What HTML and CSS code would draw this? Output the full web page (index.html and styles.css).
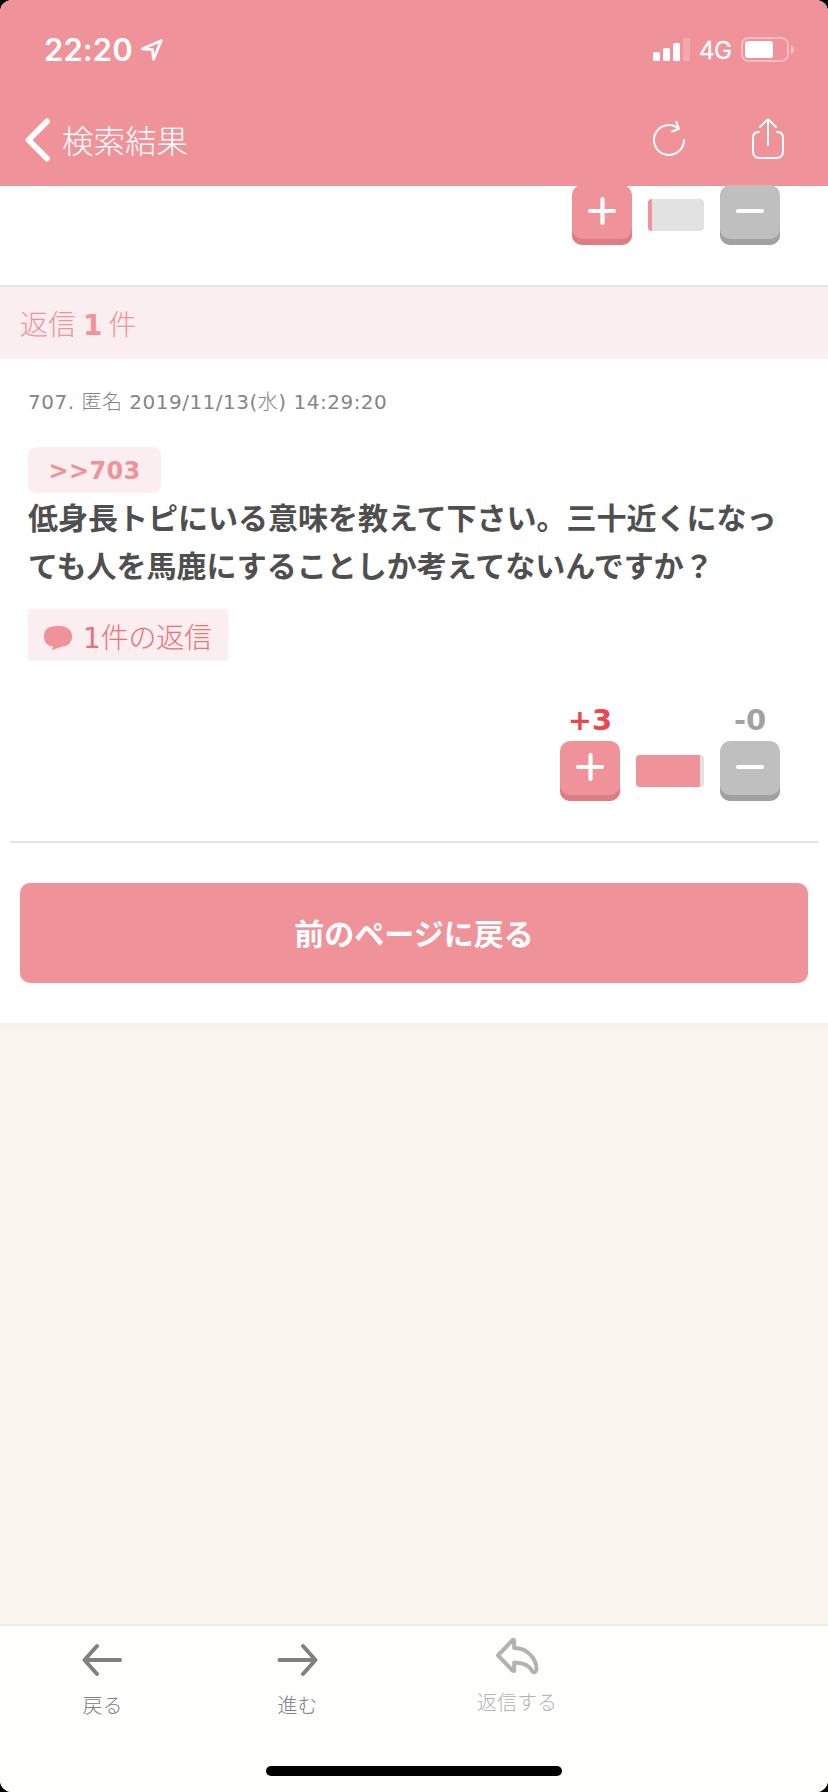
FILE: index.html
```html
<!DOCTYPE html>
<html lang="ja">
<head>
<meta charset="utf-8">
<title>検索結果</title>
<link rel="stylesheet" href="styles.css">
</head>
<body>
<div class="screen">
  <header class="header">
    <div class="status">
      <span class="time">22:20</span>
      <svg class="location" width="24" height="24" viewBox="0 0 24 24"><path d="M2.500 10.800 21.200 2.700 13.500 21.200 12.500 11.700Z"/></svg>
      <svg class="signal" width="37" height="23" viewBox="0 0 37 23"><rect y="14" width="7" height="9" rx="1.5"/><rect x="10" y="10" width="7" height="13" rx="1.5"/><rect x="20" y="5" width="7" height="18" rx="1.5"/><rect x="30" width="7" height="23" rx="1.5" opacity=".2"/></svg>
      <span class="network">4G</span>
      <svg class="battery" width="54" height="25" viewBox="0 0 54 25"><rect x="1" y="1" width="46" height="23" rx="6.5" fill="none" stroke="#fff" stroke-width="2" opacity=".38"/><rect x="4" y="4" width="28" height="17" rx="3"/><path d="M50 8.300Q53 9.500 53 12.500T50 16.700Z" opacity=".45"/></svg>
    </div>
    <nav class="navbar">
      <svg class="back" width="26" height="44" viewBox="0 0 26 44"><path d="M22 3.500 3.500 22 22 40.500"/></svg>
      <span class="nav-title">検索結果</span>
      <svg class="reload" width="34" height="40" viewBox="0 0 34 40"><path d="M32 21A15 15 0 1 1 27 9.800M24.500 3 27 9.800 20 12.500"/></svg>
      <svg class="share" width="34" height="42" viewBox="0 0 34 42"><path d="M8 14H7Q2 14.500 2 20V33Q2 40 9 40H25Q32 40 32 33V20Q32 14.500 27 14H26M17 27V2M9 9 15.800 2.200Q17 1 18.200 2.200L25 9"/></svg>
    </nav>
  </header>
  <main class="content">
    <section class="vote vote-top">
      <span class="key plus"><svg width="30" height="30" viewBox="0 0 30 30"><path d="M3 16H27M15.500 4V28"/></svg></span>
      <span class="ratio short"><i class="fill" style="width:4px"></i></span>
      <span class="key minus"><svg width="30" height="30" viewBox="0 0 30 30"><path d="M3 16H27"/></svg></span>
    </section>
    <h2 class="reply-heading">返信<b>1</b>件</h2>
    <article class="post">
      <p class="meta">707. <span class="thin">匿名</span> 2019/11/13(<span class="thin">水</span>) 14:29:20</p>
      <a class="anchor">&gt;&gt;703</a>
      <p class="text">低身長トピにいる意味を教えて下さい。三十近くになっても人を馬鹿にすることしか考えてないんですか？</p>
      <a class="replies"><svg width="28" height="26" viewBox="0 0 28 26"><path d="M13 1H15C24 1 28 5.500 28 11.500S24 21 19 21.500Q12 23 8 25.500L9 21.500C4 21 0 18 0 11.500S4 1 13 1Z"/></svg><span class="replies-label">1<span class="thin">件の返信</span></span></a>
      <div class="vote">
        <div class="vote-col"><b class="count up">+3</b><span class="key plus"><svg width="30" height="30" viewBox="0 0 30 30"><path d="M3 16H27M15.500 4V28"/></svg></span></div>
        <span class="ratio"><i class="fill" style="width:64px"></i></span>
        <div class="vote-col"><b class="count down">-0</b><span class="key minus"><svg width="30" height="30" viewBox="0 0 30 30"><path d="M3 16H27"/></svg></span></div>
      </div>
    </article>
    <a class="return">前のページに戻る</a>
  </main>
  <div class="backdrop"></div>
  <footer class="toolbar">
    <div class="tools">
      <a class="tool"><svg width="42" height="34" viewBox="0 0 42 34"><path d="M38 17H2.500M15 3 2.500 17 15 31"/></svg><span>戻る</span></a>
      <a class="tool forward"><svg width="42" height="34" viewBox="0 0 42 34"><path d="M2.500 17H38.500M26 3 38.500 17 26 31"/></svg><span>進む</span></a>
      <a class="tool reply"><svg width="44" height="38" viewBox="0 0 44 38"><path d="M3 18.300 17.500 3.200Q19.200 2 19.200 4.500V11C33 11 41.500 22 41.500 32.500Q40.500 36.500 37.500 34.500C34 27.500 28 25.500 19.200 25.500V32.500Q19.200 35 17.500 33.500Z"/></svg><span>返信する</span></a>
    </div>
    <div class="home"></div>
  </footer>
</div>
</body>
</html>
```
FILE: styles.css
```css
* { box-sizing: border-box; }
body { margin: 0; background: #000; font-family: "DejaVu Sans", "Noto Sans CJK JP", sans-serif; }
svg { display: block; flex: none; }
.screen { width: 828px; height: 1792px; display: flex; flex-direction: column; overflow: hidden; border-radius: 12px; background: #fff; }
.thin { font-family: "Noto Sans CJK JP", sans-serif; font-weight: 300; line-height: 1; }

.header { height: 186px; flex: none; background: #f0929a; color: #fff; }
.status { height: 99px; padding: 0 34px 0 44px; display: flex; align-items: center; fill: #fff; }
.time { width: 90px; font: 600 31px/40px Inter, sans-serif; letter-spacing: .1px; }
.location { margin: 1px auto 0 6px; fill: none; stroke: #fff; stroke-width: 2.800; stroke-linejoin: round; }
.network { width: 34px; margin: 2px 8px 0 9px; font: 400 24px/30px Inter, sans-serif; letter-spacing: -.6px; -webkit-text-stroke: .3px #fff; }
.battery { margin-right: -1px; }
.navbar { height: 84px; padding: 0 43px 0 25px; display: flex; align-items: center; fill: none; stroke: #fff; stroke-width: 2; stroke-linecap: round; stroke-linejoin: round; }
.back { margin-top: -2px; stroke-width: 6; }
.nav-title { margin: -4px auto 0 11px; font: 300 31.500px/40px "Noto Sans CJK JP", sans-serif; stroke: none; }
.reload { margin-right: 65px; margin-top: -4px; }
.share { margin-top: -4px; }

.content { height: 837px; flex: none; background: #fff; }
.vote { display: flex; justify-content: flex-end; align-items: flex-end; gap: 16px; }
.vote-top { height: 101px; padding: 0 48px 40px 0; border-bottom: 2px solid #e5e5e5; }
.vote-col { display: flex; flex-direction: column; align-items: center; }
.count { font-size: 29px; line-height: 34px; margin-bottom: 5px; position: relative; top: 1px; }
.up { color: #ea484e; }
.down { color: #a2a2a2; }
.key { width: 60px; height: 60px; padding: 10px 15px; border-radius: 10px; fill: none; stroke: #fff; stroke-width: 4.200; stroke-linecap: round; }
.plus { background: #f0929a; box-shadow: inset 0 -6px #dc7c84; }
.minus { background: #bfbfbf; box-shadow: inset 0 -6px #a1a1a1; }
.ratio { width: 68px; height: 32px; margin-bottom: 14px; border-radius: 4px; overflow: hidden; background: #e2e2e2; }
.short { width: 56px; }
.fill { display: block; height: 100%; background: #f0929a; }
.reply-heading { height: 72px; margin: 0; padding: 0 0 0 20px; background: #fbeef0; color: #f0929a; font: 300 28px/72px "Noto Sans CJK JP", sans-serif; }
.reply-heading b { font-family: "DejaVu Sans", sans-serif; font-size: 28px; font-weight: 700; line-height: 1; margin: 0 6px 0 7px; }

.post { height: 484px; margin: 0 10px; padding: 26px 38px 0 18px; display: flex; flex-direction: column; align-items: flex-start; border-bottom: 2px solid #e2e2e2; }
.meta { height: 32px; margin: 0 0 30px; color: #858585; font-size: 20px; line-height: 35px; letter-spacing: .5px; white-space: nowrap; }
.anchor { width: 133px; height: 46px; border-radius: 8px; background: #fbeef0; color: #f0929a; font-size: 24px; font-weight: 700; line-height: 48px; letter-spacing: .3px; text-align: center; }
.text { width: 756px; margin: -1px 0 1px; color: #4f4f4f; font: 700 30px/48px "Noto Sans CJK JP", sans-serif; }
.replies { width: 200px; height: 52px; margin-top: 20px; padding-left: 16px; display: flex; align-items: center; gap: 11px; border-radius: 4px; background: #fbeef0; color: #ee7178; font-size: 28px; line-height: 52px; white-space: nowrap; fill: #f0929a; }
.replies svg { margin-top: 5px; }
.replies-label { margin-top: 7px; letter-spacing: -.2px; }
.post .vote { align-self: stretch; margin-top: 41px; }
.return { height: 100px; margin: 40px 20px 0; display: block; border-radius: 10px; background: #f0929a; color: #fff; font: 700 30px/98px "Noto Sans CJK JP", sans-serif; text-align: center; }
.backdrop { flex: 1; background: linear-gradient(#f7f2eb, #faf5ee 12px); }

.toolbar { height: 168px; flex: none; padding-top: 17px; border-top: 2px solid #ebebe9; background: #fefefd; }
.tools { height: 123px; display: flex; }
.tool { width: 205px; display: flex; flex-direction: column; align-items: center; color: #808080; font: 300 20px/30px "Noto Sans CJK JP", sans-serif; fill: none; stroke: #808080; stroke-width: 4; stroke-linecap: round; stroke-linejoin: round; }
.tool span { margin-top: 13px; stroke: none; }
.forward { width: 185px; }
.reply { width: 254px; margin-top: -6px; color: #b2b2b2; stroke: #b2b2b2; }
.reply span { margin-top: 12px; }
.home { width: 296px; height: 10px; margin: 0 auto; border-radius: 5px; background: #000; }
```
